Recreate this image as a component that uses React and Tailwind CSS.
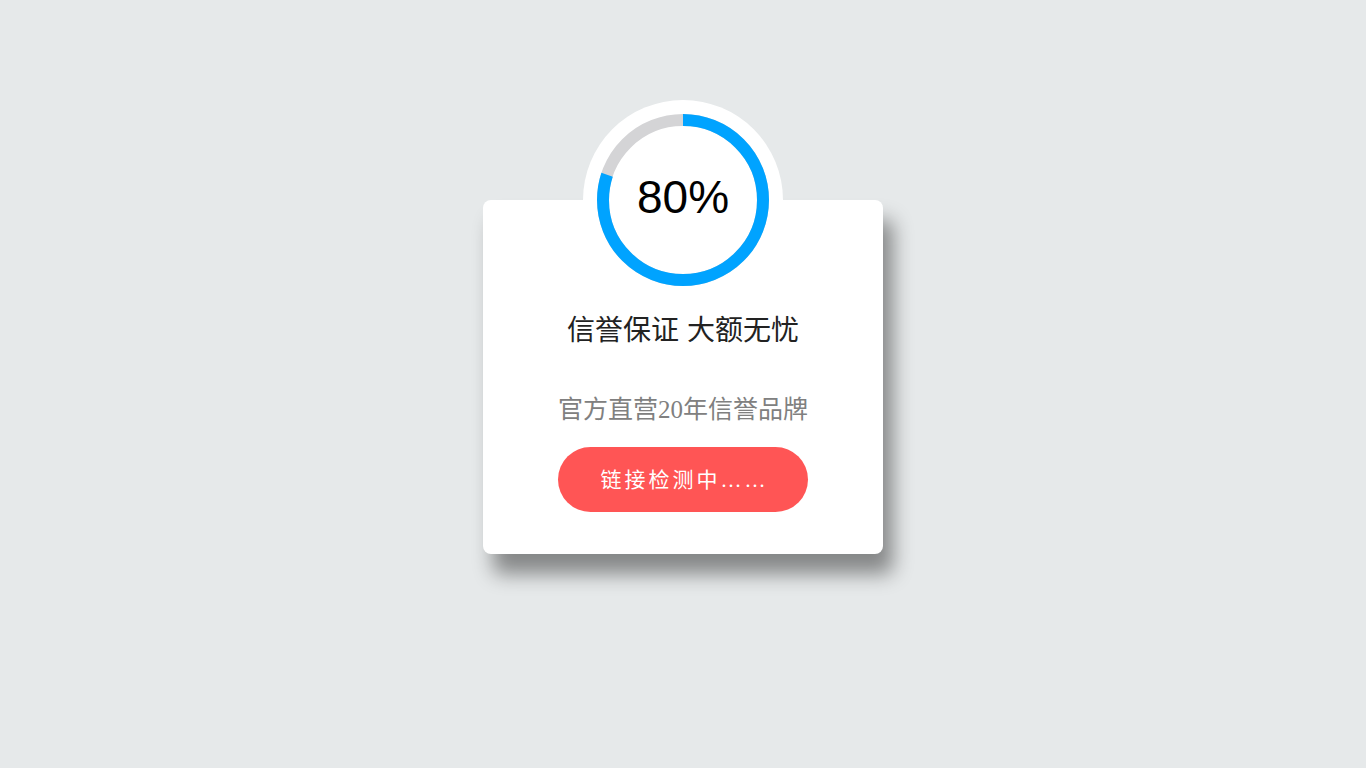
import React from "react";

const R = 80;
const C = 2 * Math.PI * R;

function ProgressRing({ percent }) {
  return (
    <div className="relative z-10 h-[200px] w-[200px] rounded-full bg-white">
      <svg viewBox="0 0 200 200" className="h-full w-full">
        <circle cx="100" cy="100" r={R} fill="none" stroke="#d4d4d6" strokeWidth="12" />
        <circle
          cx="100"
          cy="100"
          r={R}
          fill="none"
          stroke="#00a3ff"
          strokeWidth="12"
          strokeDasharray={`${(C * percent) / 100} ${C}`}
          transform="rotate(-90 100 100)"
        />
      </svg>
      <div className="absolute inset-0 flex items-center justify-center pb-[6px] font-['Liberation_Sans',Arial,sans-serif] text-[46px] text-black">
        {percent}%
      </div>
    </div>
  );
}

export default function App() {
  return (
    <div className="min-h-screen bg-[#e6e9ea] flex flex-col items-center pt-[100px]">
      <ProgressRing percent={80} />
      <div className="-mt-[100px] w-[400px] rounded-lg bg-white pt-[100px] pb-[42px] flex flex-col items-center shadow-[10px_20px_20px_rgba(0,0,0,0.42)]">
        <h2 className="mt-[11px] text-[28px] leading-[40px] text-[#222] font-['Liberation_Sans','Noto_Sans_CJK_SC',sans-serif]">
          信誉保证 大额无忧
        </h2>
        <p className="mt-[43px] text-[25px] leading-[32px] text-[#808080] font-['Liberation_Serif','Noto_Sans_CJK_SC',serif]">
          官方直营20年信誉品牌
        </p>
        <button className="mt-[21px] h-[65px] w-[250px] rounded-full bg-[#ff5555] text-white text-[21px] tracking-[3px] pl-[3px] pt-[2px] font-['Liberation_Serif','Noto_Sans_CJK_SC',serif]">
          链接检测中……
        </button>
      </div>
    </div>
  );
}
